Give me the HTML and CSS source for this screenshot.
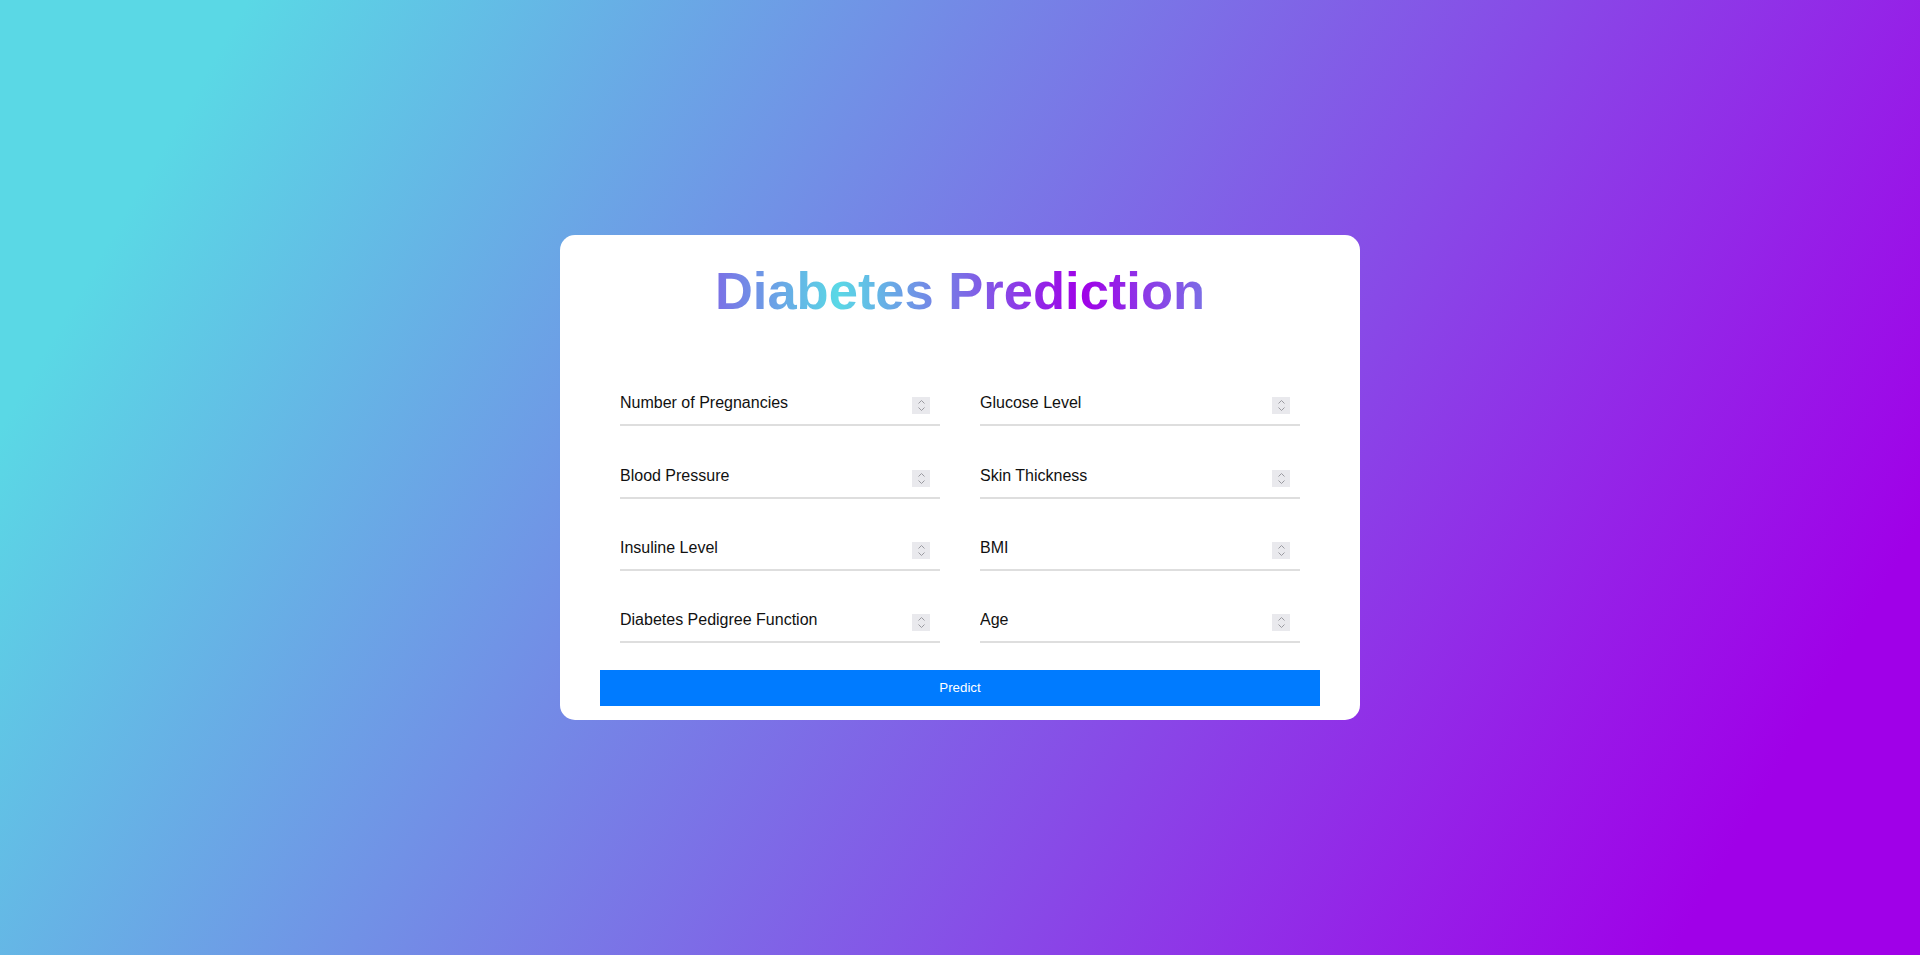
FILE: index.html
```html
<!DOCTYPE html>
<html lang="en">
<head>
<meta charset="utf-8">
<title>Diabetes Prediction</title>
<link rel="stylesheet" href="styles.css">
</head>
<body>
<main class="card">
  <div class="title-wrap"><h1 class="title">Diabetes Prediction</h1></div>
  <form class="form">
    <div class="grid">
      <label class="field"><input class="field-input" type="number" placeholder="Number of Pregnancies"><span class="spin"><svg width="18" height="17" viewBox="0 0 18 17"><rect width="18" height="17" fill="#e9e9ed"/><path d="M6.5 6.5 L9.5 3.5 L12.5 6.5 M6.5 10.5 L9.5 13.5 L12.5 10.5" fill="none" stroke="#9a9aa0" stroke-width="1"/></svg></span></label>
      <label class="field"><input class="field-input" type="number" placeholder="Glucose Level"><span class="spin"><svg width="18" height="17" viewBox="0 0 18 17"><rect width="18" height="17" fill="#e9e9ed"/><path d="M6.5 6.5 L9.5 3.5 L12.5 6.5 M6.5 10.5 L9.5 13.5 L12.5 10.5" fill="none" stroke="#9a9aa0" stroke-width="1"/></svg></span></label>
      <label class="field"><input class="field-input" type="number" placeholder="Blood Pressure"><span class="spin"><svg width="18" height="17" viewBox="0 0 18 17"><rect width="18" height="17" fill="#e9e9ed"/><path d="M6.5 6.5 L9.5 3.5 L12.5 6.5 M6.5 10.5 L9.5 13.5 L12.5 10.5" fill="none" stroke="#9a9aa0" stroke-width="1"/></svg></span></label>
      <label class="field"><input class="field-input" type="number" placeholder="Skin Thickness"><span class="spin"><svg width="18" height="17" viewBox="0 0 18 17"><rect width="18" height="17" fill="#e9e9ed"/><path d="M6.5 6.5 L9.5 3.5 L12.5 6.5 M6.5 10.5 L9.5 13.5 L12.5 10.5" fill="none" stroke="#9a9aa0" stroke-width="1"/></svg></span></label>
      <label class="field"><input class="field-input" type="number" placeholder="Insuline Level"><span class="spin"><svg width="18" height="17" viewBox="0 0 18 17"><rect width="18" height="17" fill="#e9e9ed"/><path d="M6.5 6.5 L9.5 3.5 L12.5 6.5 M6.5 10.5 L9.5 13.5 L12.5 10.5" fill="none" stroke="#9a9aa0" stroke-width="1"/></svg></span></label>
      <label class="field"><input class="field-input" type="number" placeholder="BMI"><span class="spin"><svg width="18" height="17" viewBox="0 0 18 17"><rect width="18" height="17" fill="#e9e9ed"/><path d="M6.5 6.5 L9.5 3.5 L12.5 6.5 M6.5 10.5 L9.5 13.5 L12.5 10.5" fill="none" stroke="#9a9aa0" stroke-width="1"/></svg></span></label>
      <label class="field"><input class="field-input" type="number" placeholder="Diabetes Pedigree Function"><span class="spin"><svg width="18" height="17" viewBox="0 0 18 17"><rect width="18" height="17" fill="#e9e9ed"/><path d="M6.5 6.5 L9.5 3.5 L12.5 6.5 M6.5 10.5 L9.5 13.5 L12.5 10.5" fill="none" stroke="#9a9aa0" stroke-width="1"/></svg></span></label>
      <label class="field"><input class="field-input" type="number" placeholder="Age"><span class="spin"><svg width="18" height="17" viewBox="0 0 18 17"><rect width="18" height="17" fill="#e9e9ed"/><path d="M6.5 6.5 L9.5 3.5 L12.5 6.5 M6.5 10.5 L9.5 13.5 L12.5 10.5" fill="none" stroke="#9a9aa0" stroke-width="1"/></svg></span></label>
    </div>
    <button class="predict" type="button">Predict</button>
  </form>
</main>
</body>
</html>
```
FILE: styles.css
```css
html, body {
  margin: 0;
  height: 100%;
}
body {
  font-family: "Liberation Sans", Arial, sans-serif;
  background: linear-gradient(120deg, #5ad8e5 10%, #a000e8 90%);
  display: flex;
  align-items: center;
  justify-content: center;
  min-height: 100vh;
}
.card {
  width: 800px;
  box-sizing: border-box;
  background: #fff;
  border-radius: 15px;
  padding: 27.5px 40px 14px;
}
.title-wrap {
  text-align: center;
  height: 56px;
}
.title {
  display: inline-block;
  margin: 0;
  font-size: 52.5px;
  line-height: 56px;
  font-weight: bold;
  letter-spacing: 0;
  background: linear-gradient(90deg, #7b6fe6 0%, #5ad8e6 25%, #7b6fe6 50%, #a000e8 75%, #7b6fe6 100%);
  -webkit-background-clip: text;
  background-clip: text;
  color: transparent;
}
.form {
  margin-top: 67.4px;
}
.grid {
  display: grid;
  grid-template-columns: 320px 320px;
  column-gap: 40px;
  row-gap: 32.4px;
  padding: 0 20px;
}
.field {
  display: flex;
  align-items: flex-start;
  width: 320px;
  height: 40px;
  box-sizing: border-box;
  border-bottom: 2px solid #dedede;
}
.field-input {
  flex: 1;
  min-width: 0;
  height: 38px;
  box-sizing: border-box;
  font-family: "Liberation Sans", Arial, sans-serif;
  font-size: 16px;
  line-height: 18px;
  color: #111;
  border: none;
  padding: 8px 0 12px 0;
  margin: 0;
  outline: none;
  background: transparent;
  -moz-appearance: textfield;
  appearance: textfield;
}
.field-input::-webkit-inner-spin-button,
.field-input::-webkit-outer-spin-button {
  -webkit-appearance: none;
  margin: 0;
}
.field-input::placeholder {
  color: #111;
  opacity: 1;
}
.spin {
  display: block;
  width: 18px;
  height: 17px;
  margin: 11px 10px 0 2px;
}
.spin svg {
  display: block;
}
.predict {
  display: block;
  width: 100%;
  height: 36px;
  margin-top: 26.4px;
  border: none;
  border-radius: 0;
  background: #007bff;
  color: #fff;
  font-family: "Liberation Sans", Arial, sans-serif;
  font-size: 13.333px;
  cursor: pointer;
  padding: 0;
}
```
